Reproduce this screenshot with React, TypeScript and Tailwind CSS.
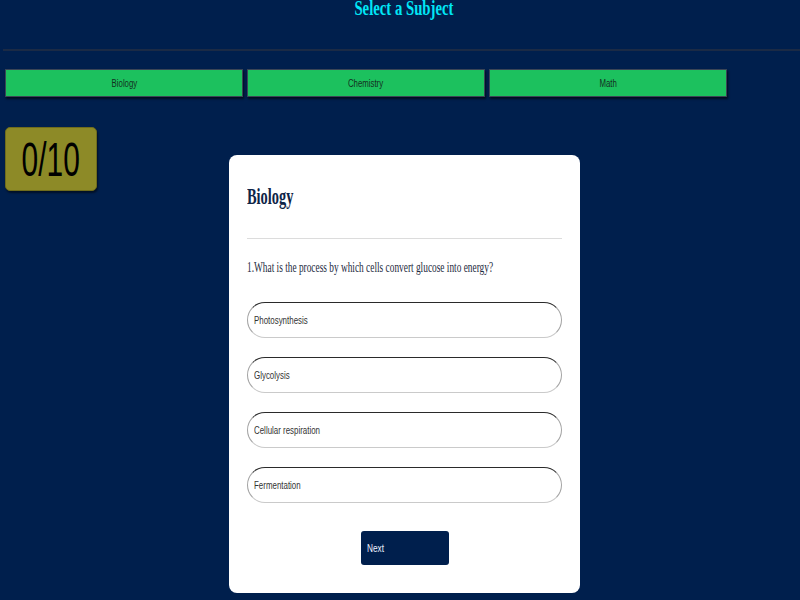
const subjects = ['Biology', 'Chemistry', 'Math'];
const options = ['Photosynthesis', 'Glycolysis', 'Cellular respiration', 'Fermentation'];

const serif = "font-['Liberation_Serif',_'Times_New_Roman',_serif]";
const sans = "font-['Liberation_Sans',_Arial,_sans-serif]";

const App = () => {
  return (
    <div className="min-h-screen bg-[#001f4d] overflow-hidden">
      {/* Header */}
      <div className="h-[49px] flex justify-center pl-[8px]">
        <h1 className={`${serif} mt-[-3px] text-[22px] leading-none font-bold text-[#00e6f6]`}>
          <span className="inline-block scale-x-[0.67] origin-center whitespace-nowrap">Select a Subject</span>
        </h1>
      </div>
      <div className="ml-[3px] h-[2px] bg-[#1b2a45]" />

      {/* Subject buttons */}
      <div className="flex gap-[4px] px-[5px] mt-[18px]">
        {subjects.map((s) => (
          <button
            key={s}
            className={`${sans} w-[238px] h-[28px] bg-[#1cc15e] border border-[#3a4556] shadow-[1px_2px_2px_rgba(0,0,0,0.6)] text-[10px] text-[#13301f] flex items-center justify-center`}
          >
            <span className="inline-block scale-x-[0.78] origin-center">{s}</span>
          </button>
        ))}
      </div>

      <div className="flex items-start mt-[30px]">
        {/* Score */}
        <div className="ml-[5px] w-[92px] h-[64px] bg-[#8d8a27] rounded-[5px] border border-[#6f6c1c] shadow-[1px_2px_2px_rgba(0,0,0,0.5)] flex items-center justify-center">
          <span className={`${sans} inline-block text-[49px] leading-none text-black scale-x-[0.61] origin-center`}>0/10</span>
        </div>

        {/* Quiz card */}
        <div className="ml-[132px] mt-[28px] w-[351px] bg-white rounded-[8px] pt-[29px] px-[18px] pb-[28px]">
          <h2 className={`${serif} text-[24px] leading-none font-bold text-[#0f2547] h-[24px]`}>
            <span className="inline-block scale-x-[0.6] origin-left whitespace-nowrap">Biology</span>
          </h2>
          <div className="mt-[30px] h-px bg-[#dcdcdc]" />
          <p className={`${serif} mt-[21px] text-[15px] leading-none text-[#1d2a3e] h-[15px] whitespace-nowrap`}>
            <span className="inline-block scale-x-[0.623] origin-left">1.What is the process by which cells convert glucose into energy?</span>
          </p>
          <div className="mt-[27px] flex flex-col gap-[19px]">
            {options.map((o) => (
              <div
                key={o}
                className={`${sans} h-[36px] rounded-[18px] border border-[#a3a3a3] border-t-[#2a2a2a] border-b-[#cacaca] flex items-center px-[6px] text-[11px] text-[#333]`}
              >
                <span className="inline-block scale-x-[0.72] origin-left whitespace-nowrap">{o}</span>
              </div>
            ))}
          </div>
          <div className="mt-[28px] flex justify-center">
            <button className={`${sans} w-[88px] h-[34px] bg-[#001f4d] rounded-[3px] text-[#eef2ff] text-[11px] font-medium flex items-center px-[6px]`}>
              <span className="inline-block scale-x-[0.75] origin-left">Next</span>
            </button>
          </div>
        </div>
      </div>
    </div>
  );
};

export default App;
